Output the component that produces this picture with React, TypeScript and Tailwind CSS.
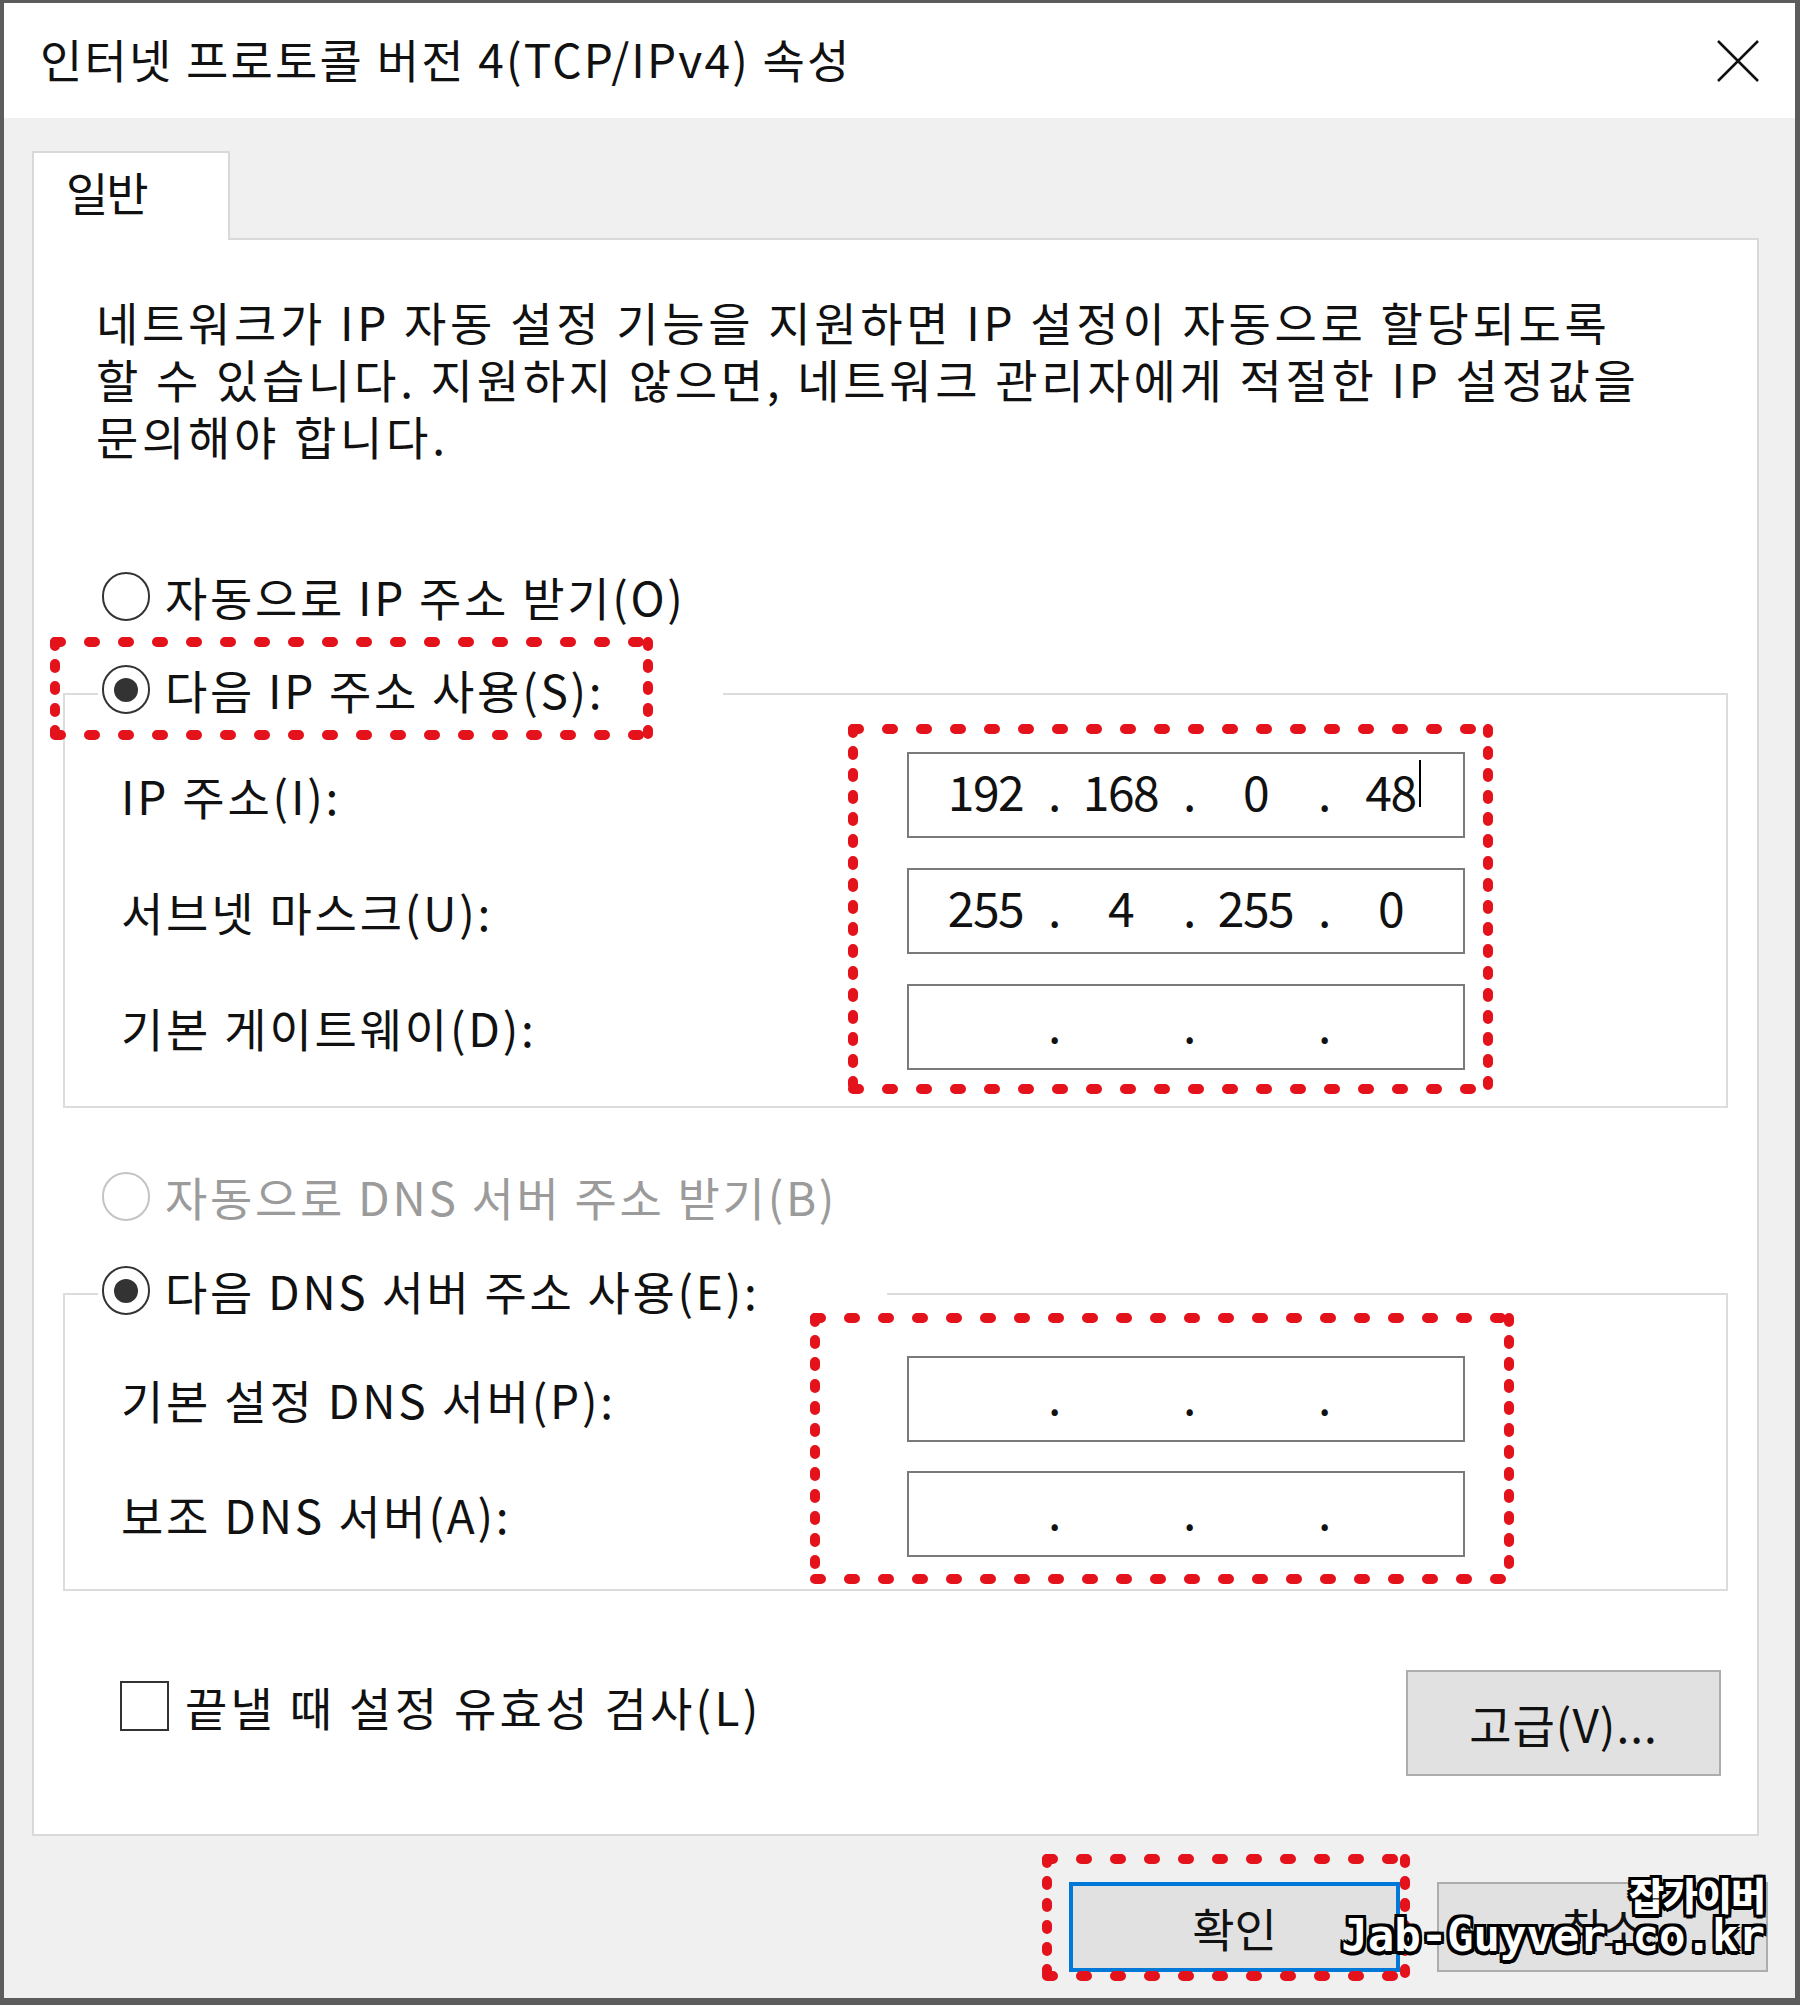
const Radio = ({ checked, disabled }: { checked?: boolean; disabled?: boolean }) => (
  <span
    className={`w-[48px] h-[49px] shrink-0 rounded-full border-2 flex items-center justify-center bg-white ${
      disabled ? 'border-[#c4c4c4]' : 'border-[#333333]'
    }`}
  >
    {checked && <span className="w-[24px] h-[24px] rounded-full bg-[#333333]" />}
  </span>
)

const IpBox = ({ vals, cursor }: { vals: string[]; cursor?: boolean }) => (
  <div className="w-[558px] h-[86px] shrink-0 border-2 border-[#7a7a7a] bg-white flex items-center pl-[14px] pb-[10px] text-[48px] tracking-[-1.5px] leading-[48px]">
    {vals.map((v, i) => (
      <div key={i} className="flex items-center">
        <span className="relative w-[125px] text-center">
          {v}
          {cursor && i === 3 && (
            <span className="absolute right-[32px] top-[-6px] w-[2px] h-[47px] bg-black" />
          )}
        </span>
        {i < 3 && <span className="w-[10px] text-center">.</span>}
      </div>
    ))}
  </div>
)

const DashBox = ({ className, w, h }: { className: string; w: number; h: number }) => (
  <div className={`absolute pointer-events-none ${className}`}>
    <svg width={w} height={h} viewBox={`0 0 ${w} ${h}`}>
      <g stroke="#e3121b" strokeWidth="10" strokeLinecap="round" fill="none">
        <line x1="6" y1="6" x2={w - 6} y2="6" strokeDasharray="6 28" />
        <line x1="6" y1={h - 6} x2={w - 6} y2={h - 6} strokeDasharray="6 28" />
        <line x1="6" y1="6" x2="6" y2={h - 6} strokeDasharray="4 18" />
        <line x1={w - 6} y1="6" x2={w - 6} y2={h - 6} strokeDasharray="4 18" />
      </g>
    </svg>
  </div>
)

const Row = ({ label, children }: { label: string; children: React.ReactNode }) => (
  <div className="flex items-center">
    <span className="w-[786px] shrink-0 text-[46px] leading-[57px] tracking-[2.8px] whitespace-nowrap">{label}</span>
    {children}
  </div>
)

const empty = ['', '', '', '']

export default function App() {
  return (
    <div className="relative w-[1800px] h-[2005px] overflow-hidden font-['Noto_Sans_CJK_KR',sans-serif] text-[#111111]">
      <div className="w-full h-full flex flex-col border-l-4 border-t-[3px] border-r-[5px] border-b-[7px] border-[#5c5c5c] bg-[#f0f0f0]">
        {/* title bar */}
        <div className="h-[115px] shrink-0 bg-white flex items-center justify-between pl-[36px] pr-[36px]">
          <span className="text-[46px] tracking-[2.2px] leading-none pb-[6px] whitespace-nowrap">
            인터넷 프로토콜 버전 4(TCP/IPv4) 속성
          </span>
          <svg width="42" height="42" viewBox="0 0 42 42">
            <path d="M1 1L41 41M41 1L1 41" stroke="#111" strokeWidth="2.5" />
          </svg>
        </div>

        <div className="flex-1 flex flex-col pl-[28px] pt-[33px]">
          <div className="relative z-10 w-[198px] h-[89px] -mb-[2px] bg-white border-2 border-b-0 border-[#d9d9d9] pl-[32px] pt-[10px] text-[46px] leading-[57px] tracking-[-2px]">
            일반
          </div>
          <div className="w-[1727px] h-[1598px] shrink-0 bg-white border-2 border-[#d9d9d9] flex flex-col">
            <p className="mt-[53px] pl-[62px] text-[46px] leading-[57px] tracking-[3.7px] whitespace-nowrap">
              네트워크가 IP 자동 설정 기능을 지원하면 IP 설정이 자동으로 할당되도록
              <br />
              할 수 있습니다. 지원하지 않으면, 네트워크 관리자에게 적절한 IP 설정값을
              <br />
              문의해야 합니다.
            </p>

            <div className="mt-[104px] pl-[68px] h-[57px] flex items-center gap-[15px] text-[46px] leading-[57px] tracking-[2.7px]">
              <Radio />
              <span>자동으로 IP 주소 받기(O)</span>
            </div>

            <div className="relative mt-[68px] mx-[29px] border-2 border-[#dcdcdc] pt-[57px] pb-[36px] pl-[56px] flex flex-col gap-[30px]">
              <div className="absolute top-[-34px] left-[33px] w-[625px] h-[57px] bg-white flex items-center gap-[15px] pl-[4px] text-[46px] leading-[57px] tracking-[2.7px]">
                <Radio checked />
                <span>다음 IP 주소 사용(S):</span>
              </div>
              <Row label="IP 주소(I):">
                <IpBox vals={['192', '168', '0', '48']} cursor />
              </Row>
              <Row label="서브넷 마스크(U):">
                <IpBox vals={['255', '4', '255', '0']} />
              </Row>
              <Row label="기본 게이트웨이(D):">
                <IpBox vals={empty} />
              </Row>
            </div>

            <div className="mt-[60px] pl-[68px] h-[57px] flex items-center gap-[15px] text-[46px] leading-[57px] tracking-[2.7px] text-[#9b9b9b]">
              <Radio disabled />
              <span>자동으로 DNS 서버 주소 받기(B)</span>
            </div>

            <div className="relative mt-[68px] mx-[29px] border-2 border-[#dcdcdc] pt-[61px] pb-[32px] pl-[56px] flex flex-col gap-[29px]">
              <div className="absolute top-[-33px] left-[33px] w-[789px] h-[57px] bg-white flex items-center gap-[15px] pl-[4px] text-[46px] leading-[57px] tracking-[2.7px]">
                <Radio checked />
                <span>다음 DNS 서버 주소 사용(E):</span>
              </div>
              <Row label="기본 설정 DNS 서버(P):">
                <IpBox vals={empty} />
              </Row>
              <Row label="보조 DNS 서버(A):">
                <IpBox vals={empty} />
              </Row>
            </div>

            <div className="mt-[79px] flex justify-between items-start pl-[86px] pr-[36px]">
              <div className="mt-[11px] flex items-center gap-[16px] text-[46px] leading-[50px] tracking-[3.3px]">
                <span className="w-[49px] h-[50px] border-2 border-[#333333] bg-white" />
                <span>끝낼 때 설정 유효성 검사(L)</span>
              </div>
              <button className="w-[315px] h-[106px] bg-[#e1e1e1] border-2 border-[#adadad] flex items-center justify-center text-[46px] leading-none tracking-[1px]">
                고급(V)...
              </button>
            </div>
          </div>

          <div className="mt-[46px] flex justify-end gap-[37px] pr-[27px]">
            <button className="w-[331px] h-[90px] bg-[#e1e1e1] border-4 border-[#0078d7] flex items-center justify-center text-[46px] leading-none">
              확인
            </button>
            <button className="w-[331px] h-[90px] bg-[#e1e1e1] border-2 border-[#adadad] flex items-center justify-center text-[46px] leading-none">
              취소
            </button>
          </div>
        </div>
      </div>

      {/* annotations */}
      <DashBox className="left-[49px] top-[636px]" w={605} h={105} />
      <DashBox className="left-[847px] top-[723px]" w={647} h={372} />
      <DashBox className="left-[809px] top-[1312px]" w={706} h={273} />
      <DashBox className="left-[1041px] top-[1853px]" w={370} h={129} />

      <div className="absolute right-[35px] top-[1872px] flex flex-col items-end text-white [text-shadow:-3px_-3px_0_#000,3px_-3px_0_#000,-3px_3px_0_#000,3px_3px_0_#000,0_3px_0_#000,0_-3px_0_#000,3px_0_0_#000,-3px_0_0_#000,0_4px_0_#000]">
        <span className="text-[38px] leading-[44px] font-black tracking-[-1px]">잡가이버</span>
        <span className="font-['DejaVu_Sans_Mono',monospace] font-bold text-[44px] leading-[40px]">
          Jab-Guyver.co.kr
        </span>
      </div>
    </div>
  )
}
